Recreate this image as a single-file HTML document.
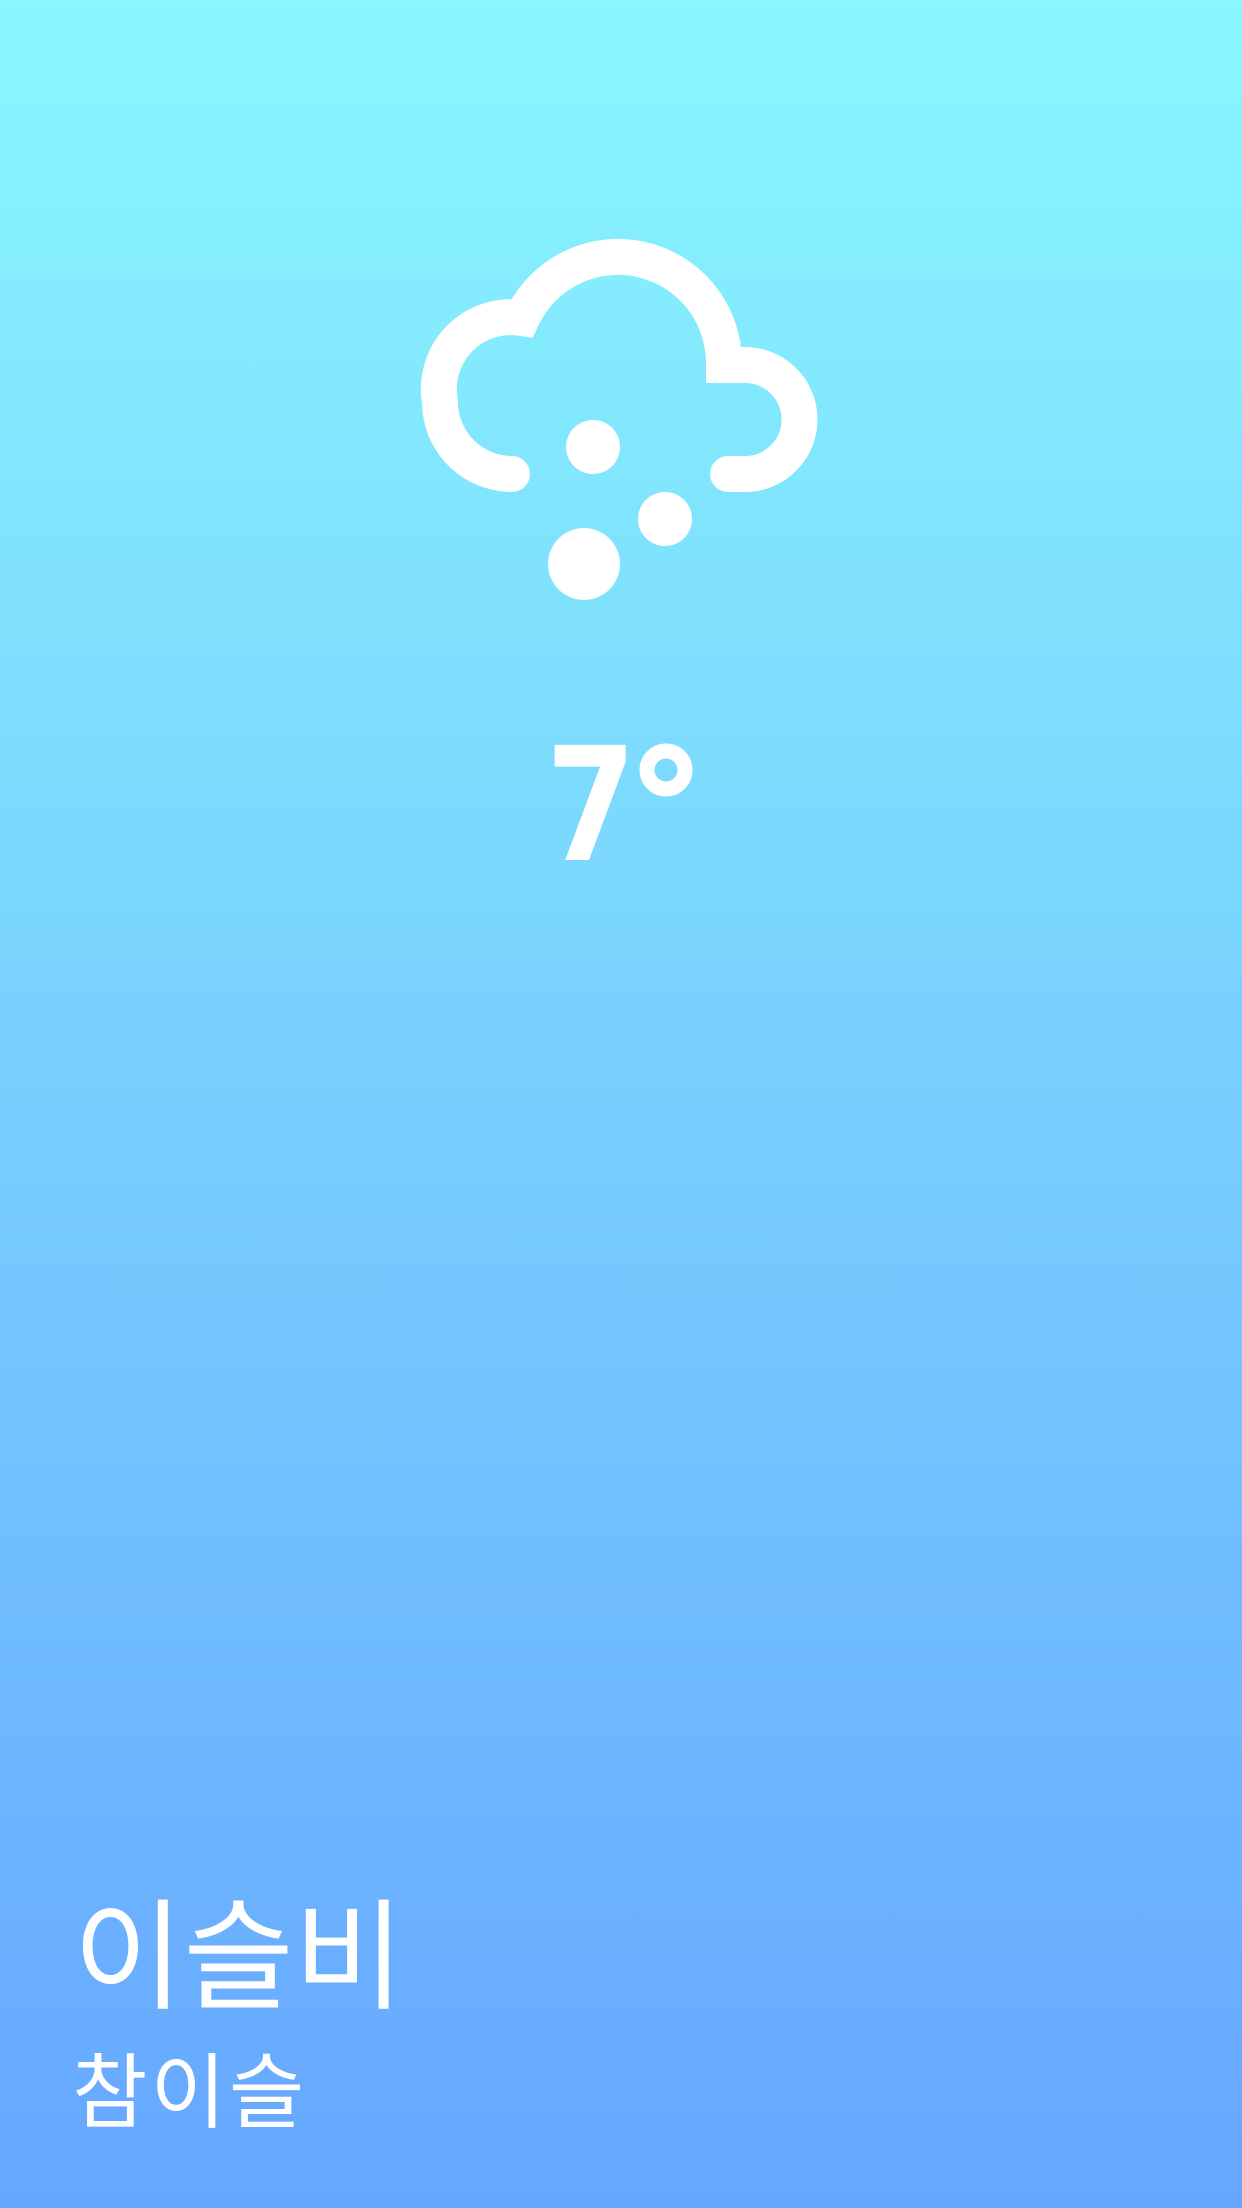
<!DOCTYPE html>
<html><head><meta charset="utf-8"><style>
html,body{margin:0;padding:0}
body{width:1242px;height:2208px;background:linear-gradient(180deg,#89f7fe 0%,#66a6ff 100%);position:relative;overflow:hidden;font-family:"Liberation Sans","Noto Sans CJK KR",sans-serif;color:#fff}
.n{position:absolute;left:73px;top:1883px;font-size:120px;line-height:150px}
.s{position:absolute;left:72px;top:2049px;font-size:82px;line-height:90px;letter-spacing:3px}
</style></head><body>
<svg width="1242" height="2208" style="position:absolute;left:0;top:0">
<path d="M512,474 A72,72 0 0 1 440,402 A72,72 0 0 1 522,318 A106,106 0 0 1 724,364 L724,365 L745,365 A54.5,54.5 0 0 1 745,474 L728,474" fill="none" stroke="#fff" stroke-width="36" stroke-linecap="round" stroke-linejoin="miter"/>
<circle cx="593" cy="447" r="27" fill="#fff"/>
<circle cx="665" cy="519" r="27" fill="#fff"/>
<circle cx="584" cy="564" r="36" fill="#fff"/>
<circle cx="666" cy="770" r="19" fill="none" stroke="#fff" stroke-width="15"/>
<text x="546" y="860" font-family="DejaVu Sans, sans-serif" font-weight="bold" font-size="158" fill="#fff" textLength="90" lengthAdjust="spacingAndGlyphs">7</text>
</svg>
<div class="n">이슬비</div>
<div class="s">참이슬</div>
</body></html>
